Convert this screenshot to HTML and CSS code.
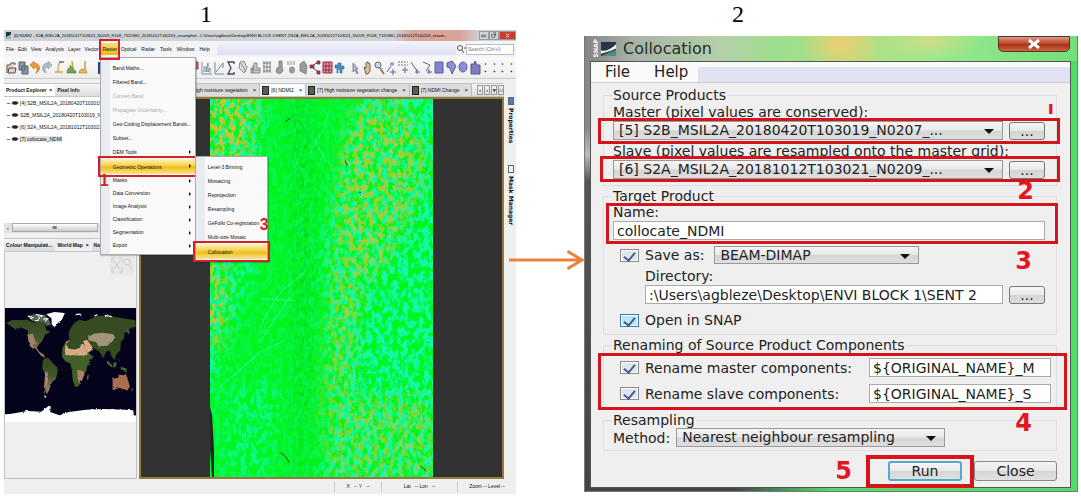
FILE: index.html
```
<!DOCTYPE html>
<html lang="en">
<head>
<meta charset="utf-8">
<title>Collocation steps</title>
<link rel="stylesheet" href="styles.css">
</head>
<body>
<main class="page">
<section class="step step-one">
<h2 class="step-number">1</h2>
<div class="snap">
  <header class="snap-title"><span class="app-icon"></span><span class="title-text">[6] NDMI2 - S2A_MSIL2A_20181012T103021_N0209_R108_T32UMU_20181012T140203_resampled - C:\Users\agbleze\Desktop\ENVI BLOCK 1\SENT 2\S2A_MSIL2A_20181012T103021_N0209_R108_T32UMU_20181012T140203_resam...</span>
    <span class="win-buttons"><button aria-label="Minimise"><svg viewBox="0 0 10 9"><path d="M2 4h5v2H2z"/></svg></button><button aria-label="Restore"><svg viewBox="0 0 10 9"><path d="M2 3h4v4H2zM4 1h3v4"/></svg></button><button class="win-close" aria-label="Close"><svg viewBox="0 0 10 9"><path d="M3 2l4 5M7 2L3 7"/></svg></button></span></header>
  <nav class="snap-menu">
    <button>File</button><button>Edit</button><button>View</button><button>Analysis</button><button>Layer</button><button>Vector</button>
    <div class="menu-open"><button class="active">Raster</button>
      <div class="popup">
        <button>Band Maths...</button><button>Filtered Band...</button><button disabled>Convert Band</button><button disabled>Propagate Uncertainty...</button><button>Geo-Coding Displacement Bands...</button><button>Subset...</button><button class="more">DEM Tools</button>
        <div class="sub-open"><button class="more hot">Geometric Operations</button>
          <div class="popup submenu"><button>Level-3 Binning</button><button>Mosaicing</button><button>Reprojection</button><button>Resampling</button><button>GeFolki Co-registration</button><button>Multi-size Mosaic</button><button class="hot">Collocation</button><b class="mark mark-three">3</b></div>
        </div>
        <button class="more">Masks</button><button class="more">Data Conversion</button><button class="more">Image Analysis</button><button class="more">Classification</button><button class="more">Segmentation</button><button class="more">Export</button>
        <b class="mark mark-one">1</b>
      </div>
    </div>
    <button>Optical</button><button>Radar</button><button>Tools</button><button>Window</button><button>Help</button>
    <span class="menu-fill"></span>
    <svg class="search-icon" viewBox="0 0 10 10"><circle cx="4" cy="4" r="2.5"/><path d="M6 6l2 3M8 4h2"/></svg>
    <input class="search" aria-label="Search" placeholder="Search (Ctrl+I)">
  </nav>
  <div class="toolbar">
    <button aria-label="Open"><svg viewBox="0 0 12 18"><path d="M2 14V6h3l1-2h4v2M3 14l1-5h7l-1 5z" fill="#ddd5cc" stroke="#5c4c44"/></svg></button>
    <button aria-label="Save"><svg viewBox="0 0 12 18"><path d="M2 3h6v8H2zM5 7h6v8H5z" fill="#8795a5" stroke="#566270"/></svg></button>
    <button aria-label="Undo"><svg viewBox="0 0 12 18"><path d="M5 2L1 6l4 4V8q5 0 2 6 5-3 3-7-1-3-5-3z" fill="#f29a38" stroke="#b96818" stroke-width=".6"/></svg></button>
    <button aria-label="Redo"><svg viewBox="0 0 12 18"><path d="M7 2l4 4-4 4V8q-5 0-2 6-5-3-3-7 1-3 5-3z" fill="#a9bdc9" stroke="#7c94a3" stroke-width=".6"/></svg></button>
    <button aria-label="Import product"><svg viewBox="0 0 12 18"><path d="M8 3Q5 3 5 13H2h8" fill="none" stroke="#d2a653" stroke-width="1.3"/><path d="M6 3h5" stroke="#667" stroke-width="1.4"/></svg></button>
    <button aria-label="Import layer"><svg viewBox="0 0 12 18"><path d="M7 2l1 8" stroke="#c9a13c" stroke-width="1.5"/><path d="M2 14q0-5 3-5v-3l4 5q2 0 2 3z" fill="#6fa84b" stroke="#3d8233" stroke-width=".6"/></svg></button>
    <button aria-label="Export"><svg viewBox="0 0 12 18"><path d="M8 2v8" stroke="#c9a13c" stroke-width="1.5"/><path d="M2 14q0-4 4-4 4 0 4 4z" fill="#e7bc51" stroke="#a58037" stroke-width=".6"/></svg></button>
    <button aria-label="RGB view"><svg viewBox="0 0 12 18"><path d="M9 3h4v12H9z" fill="#263fa3"/></svg></button>
    <span class="tool-gap"></span>
    <button aria-label="Pin"><svg viewBox="0 0 12 18"><path d="M6 15V9M3 3h6v7H3z" fill="#d46984" stroke="#a2365d"/></svg></button>
    <button aria-label="Histogram"><svg viewBox="0 0 12 18"><path d="M1 3v12h10M3 13V8h2v5M5 13l2-9v9l2-4v5" fill="none" stroke="#667a8e" stroke-width=".8"/></svg></button>
    <button aria-label="Profile"><svg viewBox="0 0 12 18"><path d="M2 3v12h9M3 13l7-9v5" fill="none" stroke="#667a8e" stroke-width=".9"/></svg></button>
    <button aria-label="Statistics"><svg viewBox="0 0 12 18"><path d="M9 5V3H3l3 6-3 6h6v-2" fill="none" stroke="#414754" stroke-width="1.3"/></svg></button>
    <button aria-label="Scatter"><svg viewBox="0 0 12 18"><path d="M3 3l4-1 3 7-3 5-5-5zM4 4l5 9" fill="#dce0e3" stroke="#69717a" stroke-width=".8"/></svg></button>
    <button aria-label="Find band"><svg viewBox="0 0 12 18"><path d="M2 9h3V4h3v5h3v5H2zM2 11h9M4 14V6" fill="#c6cdd1" stroke="#70787f" stroke-width=".8"/></svg></button>
    <button aria-label="Grid"><svg viewBox="0 0 12 18"><path d="M2 4h8M2 8h8M2 12h8M3 2v12M6 2v12M9 2v12" fill="none" stroke="#6e7780" stroke-width=".9"/></svg></button>
    <button aria-label="Pin manager"><svg viewBox="0 0 12 18"><path d="M6 2h3v6l1 4-3 3-4-2 1-4 2-1z" fill="#999f9b" stroke="#777" stroke-width=".8"/></svg></button>
    <button aria-label="GCP manager"><svg viewBox="0 0 12 18"><path d="M2 3h9M2 5h9" stroke="#888" stroke-dasharray="2 1"/><ellipse cx="7" cy="11" rx="3" ry="3.5" fill="#999"/></svg></button>
    <button aria-label="Mask"><svg viewBox="0 0 12 18"><path d="M3 5l4-3 3 5-1 8-6-3z" fill="#959c9f" stroke="#7c8283" stroke-width=".8"/></svg></button>
    <button aria-label="Graph"><svg viewBox="0 0 12 18"><path d="M3 7l6-4M3 8l6 5" stroke="#444"/><path d="M1 6h4v3H1zM8 2h3v3H8zM8 12h3v3H8z" fill="#b73848" stroke="#54303b" stroke-width=".7"/></svg></button>
    <button aria-label="Batch"><svg viewBox="0 0 12 18"><path d="M2 3h9v11H2zM2 7h9M2 11h9M5 3v11M8 3v11" fill="#d99ba5" stroke="#9a2441"/></svg></button>
    <button aria-label="Plugins"><svg viewBox="0 0 12 18"><path d="M2 6h3V4h3v3h3v3H9v4H7v-4H5v4H4v-5H2z" fill="#3f93c4" stroke="#2d6d99" stroke-width=".6"/></svg></button>
    <button aria-label="Select" class="divide"><svg viewBox="0 0 12 18"><path d="M4 4v9l2-2 2 4 1-1-2-4h2z" fill="#b7b7d2" stroke="#707091" stroke-width=".8"/></svg></button>
    <button aria-label="Pan"><svg viewBox="0 0 12 18"><path d="M3 8l2 1V4h1V3h1v1h1l1 1v7l-2 3H5z" fill="#dfc09d" stroke="#4a3d38" stroke-width=".8"/></svg></button>
    <button aria-label="Zoom"><svg viewBox="0 0 12 18"><path d="M7 9l4 6" stroke="#a07950" stroke-width="2"/><circle cx="5" cy="6" r="3" fill="#cbd6df" stroke="#626974"/></svg></button>
    <button aria-label="New pin"><svg viewBox="0 0 12 18"><circle cx="7" cy="5" r="2" fill="#9c9ac6"/><path d="M6 7l-4 6M8 10v6M5 13h6" fill="none" stroke="#67648b"/></svg></button>
    <button aria-label="New GCP"><svg viewBox="0 0 12 18"><path d="M1 3h10M1 6h10" stroke="#777" stroke-dasharray="2 1"/><path d="M8 8v6M5 11h6" stroke="#67648b"/></svg></button>
    <button aria-label="Line"><svg viewBox="0 0 12 18"><path d="M2 3l6 9M8 10v5M6 13h5" fill="none" stroke="#625d8f"/></svg></button>
    <button aria-label="Polyline"><svg viewBox="0 0 12 18"><path d="M2 3l7 3-4 6M8 10v5M6 13h5" fill="none" stroke="#625d8f"/></svg></button>
    <button aria-label="Rectangle"><svg viewBox="0 0 12 18"><path d="M2 3h8v11H2z" fill="#8583cb" stroke="#5d5ba0"/></svg></button>
    <button aria-label="Polygon"><svg viewBox="0 0 12 18"><path d="M2 4l5-2 4 5-4 8-2-6-3-1z" fill="#8f8fd2" stroke="#5d5ba0"/></svg></button>
    <button aria-label="Ellipse"><svg viewBox="0 0 12 18"><ellipse cx="6" cy="8" rx="4" ry="5" fill="#8f8dd5" stroke="#5d5ba0"/></svg></button>
    <button aria-label="Magic wand"><svg viewBox="0 0 12 18"><path d="M2 5h3l1-3 2 4h3v9H2z" fill="#7f7cc0" stroke="#56548a"/></svg></button>
    <span class="overflow"><i>⁚</i><i>⁚</i><i>⁚</i><i>⁚</i></span>
  </div>
  <div class="workspace">
    <aside class="side">
      <section class="explorer">
        <div class="tabs"><button class="selected">Product Explorer &nbsp;×</button><button>Pixel Info</button></div>
        <ul class="tree"><li>[4] S2B_MSIL2A_20180420T103019_N0207</li><li>S2B_MSIL2A_20180420T103019_N0207_R</li><li>[6] S2A_MSIL2A_20181012T103021_N0209</li><li><mark>[7] collocate_NDMI</mark></li></ul>
        <div class="scroll"><span>‹</span><b>ııı</b></div>
      </section>
      <section class="world">
        <div class="tabs"><button>Colour Manipulati...</button><button class="selected">World Map &nbsp;×</button><button>Navigation</button></div>
        <div class="world-body">
          <svg class="zoom-tools" viewBox="0 0 24 20"><path d="M2 8V3h3M9 3h3v5M2 12v5h3M9 17h3v-5M4 6l6 8M10 6l-6 8M19 10l4 6"/><circle cx="17" cy="7" r="3"/></svg>
          <svg class="map" viewBox="12 51 402 341" preserveAspectRatio="none">
            <defs>
              <linearGradient id="earth" x2="0" y2="1"><stop stop-color="#35491f"/><stop offset=".5" stop-color="#41572b"/><stop offset=".8" stop-color="#8d755b"/></linearGradient>
              <filter id="rough"><feTurbulence type="fractalNoise" baseFrequency=".08" numOctaves="3"/><feDisplacementMap in="SourceGraphic" scale="7"/></filter>
            </defs>
            <path d="M12 51h402v341H12z" fill="#03041c"/>
            <g filter="url(#rough)">
              <path d="M16 96l25-9 40 0 20 8 20-8 13 10 4 20 13 5-17 10-8 18-10 9-7 11 8 12 13 7 5 9-12-3-17-21-12-8-11-19-1-29-17-7-24 2z" fill="url(#earth)"/>
              <path d="M80 130l18-2 8 28-9 6 3 14-12-12z" fill="#a08066"/>
              <path d="M80 76l23-6 31 1 13 16 6 13-12 5-12-12-33-2z" fill="#59635a"/>
              <path d="M82 75l15 5-8 3M106 70l20 5-13 9M128 84l15-1-8 8M103 90l13-3" fill="none" stroke="#fff" stroke-width="3"/>
              <path d="M138 70l25-7 32 3-9 20-11 8-10 15-10-9-1-18z" fill="#fff"/>
              <path d="M128 203l16-3 16 18 15 13-7 32-13 11-8 23-7 12-4-11 2-42-12-24z" fill="url(#earth)"/>
              <path d="M135 241l8 3 1 26-7 17-3 22-3-13z" fill="#a9826a"/>
              <path d="M199 149l23-2 29 6 9 11 11 25 13 3-11 18-11 17-1 14-13 8-4 24-8 12-9 2-8-20-2-27-5-23-16-7-10-14 2-25z" fill="#436029"/>
              <path d="M199 153l21-7 30 8 9 19 6 18-22 2-46-1-2-13z" fill="#d7a987"/>
              <path d="M233 236l15 3 8 7-8 21-6 12-8-16z" fill="#ad8267"/>
              <path d="M206 134l3-16 14-22 17-10 18 5 37-16 27-1 39 6 41 6 16 9-16 13-12 8-12 7-2 19-10 11-1 26-11 8-8 20-9-14-4-15-10 2-11 21-10-19-22-12-10-13-11 5-13-4-5 12-15 5-19-2-9-15 15-11z" fill="#354b23"/>
              <path d="M266 137l18-9 24-3 34 4 7 10-9 12-14 12-12 2-12 5-12-17-22-5z" fill="#a4947b"/>
              <path d="M251 149l13-2 6 9 10 13-4 10-12 6-7-17z" fill="#dcab88"/>
              <path d="M269 250l-3 17-4-2 1-11zM323 208l12 8 8 13-5-1-14-11zM344 213l10 1-4 15-7-2zM365 226l20 7-4 7-15-6zM356 196l5 9 3 12" fill="#496a32"/>
              <path d="M341 265l14-7 7-8 13 3 6-6 8 22 5 17-8 12-12-5-12-3-21 7z" fill="#a66d4f"/>
              <path d="M397 290l8 5-5 5zM385 111l9 11-5 9-5-12z" fill="#456137"/>
              <path d="M12 369l15-1 54-9 42 2 22-17 7 1-2 17 29 10 28-10 53-7 53-2 67 2 24 2 2 13-8 1 20 2v31H0v-22z" fill="#fff"/>
              <path d="M228 71l15-2M285 75l10-4M317 73l22 4M133 313l4 6" stroke="#dde3e6" stroke-width="4"/>
            </g>
          </svg>
        </div>
      </section>
    </aside>
    <section class="viewer">
      <div class="tabs view-tabs"><button class="view-tab">[6] High moisture vegetation<i>×</i></button><button class="view-tab selected">[6] NDMI2<i>×</i></button><button class="view-tab">[7] High moisture vegetation change<i>×</i></button><button class="view-tab">[7] NDMI Change<i>×</i></button>
        <span class="view-nav"><button aria-label="Previous">‹</button><button aria-label="Next">›</button><button aria-label="List">▾</button><button aria-label="Maximise">□</button></span></div>
      <div class="canvas">
        <svg class="scene" viewBox="0 0 225 381" preserveAspectRatio="none" role="img" aria-label="NDMI raster">
          <defs>
            <filter id="cyan" x="0" y="0" width="1" height="1" color-interpolation-filters="sRGB"><feTurbulence type="fractalNoise" baseFrequency=".19 .13" numOctaves="5" seed="4"/><feColorMatrix values="0 0 0 0 .08  0 0 0 0 .97  0 0 0 0 .66  5 0 0 0 -2"/></filter>
            <filter id="amber" x="0" y="0" width="1" height="1" color-interpolation-filters="sRGB"><feTurbulence type="fractalNoise" baseFrequency=".2 .15" numOctaves="5" seed="19"/><feColorMatrix values="0 0 0 0 .76  0 0 0 0 .78  0 0 0 0 .2  8 0 0 0 -3.7"/></filter>
            <filter id="dark" x="0" y="0" width="1" height="1" color-interpolation-filters="sRGB"><feTurbulence type="fractalNoise" baseFrequency=".4 .2" numOctaves="4" seed="8"/><feColorMatrix values="0 0 0 0 0  0 0 0 0 .78  0 0 0 0 .1  6 0 0 0 -2.8"/></filter>
            <filter id="soft" x="-.5" y="-.5" width="2" height="2"><feGaussianBlur stdDeviation="8"/></filter>
            <mask id="cyan-zone"><path d="M0 0h225v381H0z" fill="#484848"/><g filter="url(#soft)" fill="#fff"><path d="M-20-20h80l-10 80L45 170 20 230-20 381z"/><path d="M150-20h95v421H110l10-100-8-150z"/><path d="M20 290l50-10-10 101H10z" fill="#bbb"/></g></mask>
            <mask id="amber-zone"><g filter="url(#soft)" fill="#fff"><path d="M-20-20h70L35 90 15 130-20 140z"/><path d="M-10 160h26v50l-4 40h-22z"/><path d="M145 10l50-10 25 60-15 50-30 60-30 20-20-30 5-100z" fill="#ccc"/><path d="M125 150l35-10-20 150-25 20z" fill="#bbb"/><path d="M110 300h115v81H120z" fill="#999"/></g></mask>
            <mask id="dark-zone"><path d="M80-20h20l5 100 0 100-10 200H85l0-200z" fill="#bbb" filter="url(#soft)"/></mask>
          </defs>
          <path d="M0 0h225v381H0z" fill="#00f51b"/>
          <g mask="url(#dark-zone)"><path d="M0 0h225v381H0z" filter="url(#dark)"/></g>
          <g mask="url(#cyan-zone)"><path d="M0 0h225v381H0z" filter="url(#cyan)"/></g>
          <g mask="url(#amber-zone)"><path d="M0 0h225v381H0z" filter="url(#amber)"/></g>
          <path d="M49 232l17-31 9-10 20-16M50 245l30-45M10 290l40-35 25-12M100 55l15-25 5-20M52 201l35 2M160 325l17-20 8-15M105 40l12 24" fill="none" stroke="#35f3a1" stroke-width="1.2" opacity=".6"/>
          <path d="M0 310l2 8 2 34v29H2L0 352z" fill="#252525"/>
          <path d="M71 356l4 3 5 7M136 62l2 5M76 23l5-4M212 369l6 6M150 94h2" fill="none" stroke="#174517"/>
        </svg>
      </div>
    </section>
    <aside class="rail"><button><span class="rail-icon blue"></span>Properties</button><button><span class="rail-icon"></span>Mask Manager</button></aside>
  </div>
  <footer class="status"><span>X &nbsp; -- Y &nbsp; --</span><span>Lat &nbsp; -- Lon &nbsp; --</span><span>Zoom -- Level --</span></footer>
</div>
</section>

<div class="flow"><svg class="arrow" viewBox="0 0 78 24"><path d="M0 12h75M60 3l15 9-15 9"/></svg></div>

<section class="step step-two">
<h2 class="step-number">2</h2>
<form class="dialog">
  <header class="dialog-title">
    <span class="logo-name">SNAP</span>
    <svg class="logo" viewBox="9 2 14 13" preserveAspectRatio="none"><path d="M9 2h14v13H9z" fill="#293447"/><path d="M9 10q7 1 14-6v4q-6 3-14 5z" fill="#eef5f3"/><path d="M9 15l14-6v6z" fill="#4e8d75"/></svg>
    <span>Collocation</span><button type="button" class="dialog-close" aria-label="Close"><svg viewBox="0 0 14 10"><path d="M2 1l10 8M12 1L2 9"/></svg></button>
  </header>
  <div class="dialog-inner">
    <nav class="dialog-menu"><button type="button">File</button><button type="button">Help</button><span></span></nav>
    <div class="dialog-body">
      <fieldset class="sources"><legend>Source Products</legend>
        <label for="master">Master (pixel values are conserved):</label>
        <div class="row boxed box-master"><span class="combo"><select id="master"><option>[5] S2B_MSIL2A_20180420T103019_N0207_...</option></select></span><button type="button" class="dots">...</button></div>
        <label for="slave">Slave (pixel values are resampled onto the master grid):</label>
        <div class="row boxed box-slave"><span class="combo"><select id="slave"><option>[6] S2A_MSIL2A_20181012T103021_N0209_...</option></select></span><button type="button" class="dots">...</button></div>
        <b class="pen pen-one">ı</b><b class="pen pen-two">2</b>
      </fieldset>
      <fieldset class="target"><legend>Target Product</legend>
        <div class="boxed box-name"><label for="name">Name:</label><input id="name" value="collocate_NDMI"></div>
        <div class="row save"><input type="checkbox" id="save" checked><label for="save">Save as:</label><span class="combo format"><select aria-label="Format"><option>BEAM-DIMAP</option></select></span></div>
        <label for="dir" class="indent directory">Directory:</label>
        <div class="row indent"><input id="dir" value=":\Users\agbleze\Desktop\ENVI BLOCK 1\SENT 2"><button type="button" class="dots">...</button></div>
        <div class="row open"><input type="checkbox" id="open" class="lit" checked><label for="open">Open in SNAP</label></div>
        <b class="pen pen-three">3</b>
      </fieldset>
      <fieldset class="rename"><legend>Renaming of Source Product Components</legend>
        <div class="boxed box-rename">
          <div class="row"><input type="checkbox" id="rm" checked><label for="rm">Rename master components:</label><input class="pattern" aria-label="Master pattern" value="${ORIGINAL_NAME}_M"></div>
          <div class="row"><input type="checkbox" id="rs" checked><label for="rs">Rename slave components:</label><input class="pattern" aria-label="Slave pattern" value="${ORIGINAL_NAME}_S"></div>
        </div>
      </fieldset>
      <fieldset class="resample"><legend>Resampling</legend>
        <div class="row"><label for="method">Method:</label><span class="combo method"><select id="method"><option>Nearest neighbour resampling</option></select></span></div>
        <b class="pen pen-four">4</b>
      </fieldset>
      <div class="actions"><b class="pen-five">5</b><span class="boxed box-run"><button type="button" class="run">Run</button></span><button type="button" class="close">Close</button></div>
    </div>
  </div>
</form>
</section>
</main>
</body>
</html>
```
FILE: styles.css
```
* { box-sizing: border-box; }
body { margin: 0; background: #fff; color: #222; }
button, input, select { font: inherit; color: inherit; margin: 0; padding: 0; border: 0; background: none; }
h2, ul { margin: 0; padding: 0; }
.page { display: grid; grid-template-columns: 512fr 68fr 494fr; min-height: 100vh; padding: 0 3px 0 4px; }
.step { display: flex; flex-direction: column; min-width: 0; }
.step-number { font: 24px/28px "Liberation Serif", serif; color: #000; text-align: center; }
.step-one { padding-bottom: 3px; }
.step-one .step-number { padding-right: 108px; height: 30px; }
.step-two { padding-bottom: 5px; }
.step-two .step-number { padding-right: 186px; height: 36px; }

.snap { flex: 1; display: flex; flex-direction: column; background: #efefef; font: 5px/8px "Liberation Sans", sans-serif; white-space: nowrap; min-width: 0; color: #111; }
.snap-title { display: flex; align-items: center; height: 11px; gap: 3px; padding-left: 2px; background: linear-gradient(90deg, #cfd2d5 0 76%, #d9a398 80% 89%, #cdd2d6 93%); }
.app-icon { width: 5px; height: 7px; background: linear-gradient(150deg, #27364d 50%, #9ba 55%); }
.title-text { flex: 1; min-width: 0; font-size: 4px; color: #000; }
.win-buttons { display: flex; }
.win-buttons button { width: 10px; height: 9px; border: 1px solid #999; }
.win-buttons svg { display: block; width: 100%; height: 100%; fill: none; stroke: #555; }
.win-buttons .win-close { width: 17px; background: #c93c2b; }
.win-buttons .win-close svg { stroke: #fff; }
.snap-menu { display: flex; align-items: center; height: 16px; background: #f4f4f6; padding: 0 2px 0 0; }
.snap-menu > button { padding: 0 2px; }
.menu-open { position: relative; width: 18px; }
.menu-open ~ button { padding: 0 3px 0 2px; }
.active { width: 18px; height: 12px; background: linear-gradient(#f6dc7d, #edb913); text-align: center; }
.menu-open::before { content: ""; position: absolute; inset: -4px -1px -5px -2px; border: 2px solid #d5202a; z-index: 4; }
.menu-fill { flex: 1; height: 12px; margin-left: 4px; background: linear-gradient(#f0f1fa, #dcdff2); }
.search-icon { width: 10px; height: 10px; fill: none; stroke: #555; }
.search { width: 48px; height: 11px; border: 1px solid #bbb; background: #fff; padding-left: 1px; }
.search::placeholder { color: #777; }
.popup { position: absolute; left: -1px; top: 14px; width: 96px; padding: 3px 0 2px; background: linear-gradient(90deg, #e8ecf0 0 9px, #f9f9f9 9px); border: 1px solid #aaa; z-index: 3; box-shadow: 1px 1px 1px #0003; }
.popup button { display: block; width: 100%; height: 14px; line-height: 14px; padding-left: 12px; text-align: left; }
.popup button:nth-child(n+8) { height: 13px; line-height: 13px; }
.popup button:disabled { color: #aaa; }
.more { position: relative; }
.more::after { content: ""; position: absolute; right: 4px; top: 5px; border: 2px solid #0000; border-left-color: #111; border-right: 0; }
.sub-open { position: relative; }
.popup .hot { background: linear-gradient(#fff3c5, #f5d042 45%, #efbd20 55%, #fae48d); outline: 2px solid #d5202a; outline-offset: 1px; height: 15px; }
.submenu { left: 94px; top: -3px; width: 73px; }
.submenu .hot { position: relative; }
.mark { position: absolute; font: bold 16px/16px "Liberation Sans", sans-serif; color: #d5202a; z-index: 5; }
.mark-one { left: -1px; top: 115px; }
.mark-three { right: -2px; top: 60px; }
.toolbar { display: flex; align-items: center; height: 22px; padding-left: 1px; background: linear-gradient(#fafafa, #ededed); border-bottom: 1px solid #ccc; }
.toolbar button { flex: 0 1 12px; height: 18px; min-width: 0; }
.toolbar svg { display: block; width: 100%; height: 18px; }
.tool-gap { flex: 0 0 88px; }
.toolbar .divide { margin-left: 4px; }
.overflow { flex: 1; display: flex; justify-content: space-around; font-size: 12px; }
.overflow i, .view-tab i { font-style: normal; }
.workspace { flex: 1; display: grid; grid-template-columns: 134fr 366fr 10fr; gap: 2px; padding-top: 4px; min-height: 0; }
.side { display: flex; flex-direction: column; gap: 5px; min-width: 0; }
.tabs { display: flex; height: 14px; background: linear-gradient(#f6f6f6, #dcdcdc); border: 1px solid #c5c5c5; border-width: 1px 0; }
.tabs button { padding: 0 3px 0 2px; font-weight: bold; }
.tabs .selected { background: #fff; }
.explorer { flex: 149; display: flex; flex-direction: column; }
.tree { flex: 1; list-style: none; background: #fff; }
.tree li { height: 12px; line-height: 12px; padding-left: 16px; background: radial-gradient(ellipse at 11px 6px, #222 0 2px, #777 3px, #0000 4px) 0 0 / 16px 12px no-repeat, linear-gradient(#777, #777) 3px 6px / 3px 1px no-repeat; }
.tree mark { background: #e4e4e4; color: inherit; }
.scroll { height: 10px; display: flex; align-items: center; background: #e2e2e2; gap: 3px; padding-left: 3px; }
.scroll b { width: 86px; background: linear-gradient(#fff, #ccc); text-align: center; border: 1px solid #aaa; line-height: 7px; }
.world { flex: 241; display: flex; flex-direction: column; }
.world .selected { background: #eee; }
.world-body { flex: 1; border: 1px solid #c2c2c2; border-top: 0; background: #efefef; }
.zoom-tools { display: block; width: 24px; height: 20px; margin: 3px 2px 33px auto; fill: none; stroke: #ccc; stroke-width: 1; background: #e8e8e8; }
.map { display: block; width: 100%; height: 114px; }
.viewer { display: flex; flex-direction: column; min-width: 0; }
.view-tabs { padding-left: 35px; align-items: center; }
.view-tabs .view-tab { display: flex; align-items: center; gap: 2px; height: 12px; padding: 0 3px 0 2px; font-weight: normal; border-right: 1px solid #bbb; background: #dcdcdc; }
.view-tabs .selected { background: #f8fdff; }
.view-tab::before { content: ""; width: 5px; height: 7px; background: #576149; border: 1px solid #222; }
.view-tab i { font-size: 6px; margin-left: 3px; }
.view-nav { display: flex; margin-left: auto; gap: 1px; }
.view-nav button { width: 6px; height: 10px; padding: 0; border: 1px solid #999; line-height: 8px; }
.canvas { flex: 1; display: grid; grid-template-columns: 69fr 225fr 69fr; background: #323232; border: 2px solid #96793b; min-height: 0; }
.scene { grid-column: 2; display: block; width: 100%; height: 100%; min-height: 0; }
.rail { display: flex; flex-direction: column; gap: 22px; padding-top: 14px; }
.rail button { writing-mode: vertical-rl; display: flex; align-items: center; gap: 3px; width: 10px; text-align: left; font: bold 6px/8px "DejaVu Sans", sans-serif; }
.rail-icon { width: 6px; height: 8px; border: 1px solid #666; }
.blue { background: #4f7bc5; }
.status { display: flex; justify-content: flex-end; height: 15px; padding: 3px 0 2px; }
.status span { width: 47px; text-align: center; border-left: 1px solid #ccc; }
.status span:nth-child(2) { width: 76px; }
.status span:last-child { width: 59px; }

.flow { position: relative; }
.arrow { position: absolute; left: -7px; right: 0; top: 248px; width: calc(100% + 8px); height: 24px; fill: none; stroke: #e8833a; stroke-width: 3; z-index: 2; }

.dialog { flex: 1; display: flex; flex-direction: column; padding: 0 6px 3px 5px; background: linear-gradient(90deg, #0000 0 30%, #4fdc68 50%), linear-gradient(#888 0 20%, #bbb 26%, #555 32%, #444); border: 1px solid #777; border-top: 0; font: 14px/17px "DejaVu Sans", sans-serif; white-space: nowrap; }
.dialog-title { height: 25px; margin: 0 -6px 0 -5px; padding: 0 7px; display: flex; align-items: center; background: radial-gradient(ellipse 40px 30px at 52% 30%, #eccf72, #0000), radial-gradient(ellipse 50px 18px at 70% 20%, #cfdc84, #0000), linear-gradient(90deg, #858585, #a9b3a8 10%, #b4d0a8 28%, #9ddf8c 40%, #b5dd83 55%, #9ce88e 70%, #72df7b); font-size: 16px; color: #253125; }
.logo-name { writing-mode: vertical-rl; transform: rotate(180deg); font: bold 6px/8px "DejaVu Sans", sans-serif; color: #fff; }
.logo { width: 15px; height: 14px; margin: 0 7px 0 1px; }
.dialog-close { align-self: flex-start; width: 72px; height: 16px; margin-left: auto; border: 1px solid #5d302c; border-radius: 0 0 5px 5px; background: linear-gradient(#d79c89, #c2492a 45%, #a93216 55%, #c66a43); }
.dialog-close svg { display: block; width: 14px; height: 10px; margin: auto; fill: none; stroke: #fff; stroke-width: 3; }
.dialog-inner { flex: 1; background: #efefef; border: 1px solid #555; }
.dialog-menu { display: flex; align-items: center; height: 21px; background: #fafafa; border-bottom: 1px solid #ccc; font-size: 15px; }
.dialog-menu button { padding: 0 10px 0 14px; }
.dialog-menu span { flex: 1; align-self: stretch; margin: 5px 0 0 0; background: #e0e2f3; }
.dialog-body { padding: 5px 13px 4px 12px; }
fieldset { position: relative; min-width: 0; margin: 0 0 3px; padding: 1px 11px 3px 9px; border: 1px solid #dadfdf; }
legend { padding: 0 1px; margin-left: -1px; line-height: 14px; }
fieldset label { display: block; line-height: 18px; }
.row { display: flex; align-items: center; gap: 6px; }
.combo { position: relative; flex: 1; display: block; height: 19px; min-width: 0; }
.combo select { appearance: none; width: 100%; height: 100%; padding: 0 24px 0 5px; border: 1px solid #999; background: linear-gradient(#f5f5f5, #e9e9e9 48%, #d5d5d5 52%, #dedede); }
.combo::after { content: ""; position: absolute; right: 9px; top: 8px; border: 5px solid #0000; border-top-color: #111; border-bottom: 0; }
.dots { width: 36px; height: 18px; line-height: 10px; border: 1px solid #777; border-radius: 3px; background: linear-gradient(#f8f8f8, #e8e8e8 48%, #d4d4d4 52%, #ddd); }
fieldset input:not([type=checkbox]) { height: 19px; min-width: 0; padding: 0 3px; background: #fff; border: 1px solid #aaa; }
.boxed { position: relative; }
.boxed::before { content: ""; position: absolute; border: 3px solid #d5141b; pointer-events: none; z-index: 1; }
.box-master { margin-bottom: 2px; }
.box-master::before { inset: -3px -15px -4px -15px; }
.box-slave::before { inset: -4px -15px -3px -13px; }
.sources { padding-bottom: 6px; }
.box-name::before { inset: 0 -13px -4px -7px; }
.box-name input { display: block; width: 100%; }
.target { padding-top: 0; padding-bottom: 5px; }
.row.save { margin-top: 6px; }
input[type=checkbox] { appearance: none; flex: none; display: grid; place-items: center; width: 19px; height: 13px; border: 1px solid #8a8a8a; background: #dfe5ee; box-shadow: inset 0 0 0 1px #fff; }
input[type=checkbox]::after { content: ""; width: 5px; height: 9px; margin-bottom: 3px; border: solid #485a8a; border-width: 0 2px 2px 0; transform: rotate(40deg); }
input.lit { background: #bde5fa; border-color: #3a7da7; }
.save, .open { padding-left: 7px; }
.format { flex: 0 1 205px; margin-left: 4px; height: 18px; }
.indent { padding-left: 32px; }
.directory { margin-top: 3px; }
.row.indent input { flex: 1; }
.row.open { margin-top: 7px; }
.rename { padding-bottom: 6px; }
.box-rename { display: grid; gap: 7px; padding: 5px 0 0 7px; margin-right: -6px; }
.box-rename::before { inset: 0 -16px -7px -15px; }
.pattern { width: 182px; margin-left: auto; }
.resample { padding-top: 1px; }
.method { flex: 0 1 269px; }
.actions { display: flex; justify-content: flex-end; align-items: center; gap: 12px; margin-top: 10px; }
.run, .close { display: block; width: 74px; height: 20px; border: 1px solid #888; border-radius: 3px; background: linear-gradient(#f5f5f5, #e8e8e8 48%, #d6d6d6 52%, #e0e0e0); }
.run { border: 2px solid #54a9d0; line-height: 16px; }
.close { width: 83px; }
.box-run::before { inset: -6px -12px -7px -22px; border-width: 4px; }
.pen { position: absolute; font: bold 24px/24px "DejaVu Sans", sans-serif; color: #e21720; z-index: 2; }
.pen-one { right: 2px; top: -6px; font-size: 18px; }
.pen-two { right: 22px; bottom: -18px; }
.pen-three { right: 24px; top: 46px; }
.pen-four { right: 24px; top: -16px; }
.pen-five { font: bold 24px/20px "DejaVu Sans", sans-serif; color: #e21720; margin-right: 24px; }
```
